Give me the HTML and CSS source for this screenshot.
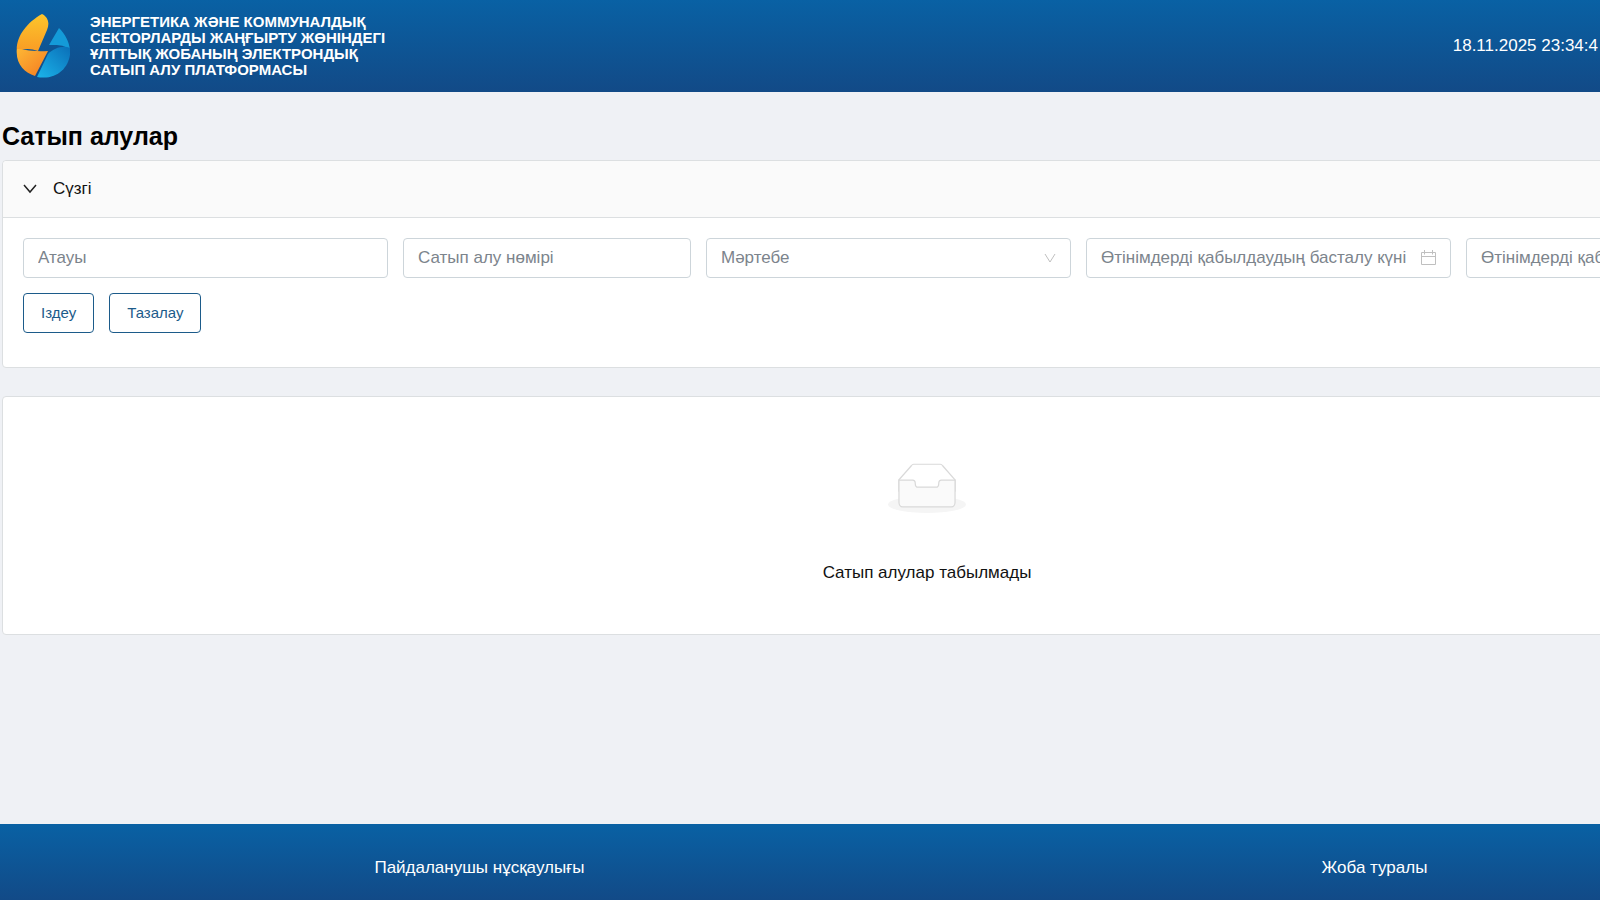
FILE: index.html
```html
<!DOCTYPE html>
<html lang="kk">
<head>
<meta charset="utf-8">
<title>Сатып алулар</title>
<link rel="stylesheet" href="styles.css">
</head>
<body>
<div class="app">
  <header class="header">
    <svg class="logo" viewBox="0 0 54 64" aria-hidden="true">
      <defs>
        <linearGradient id="flame" x1="0" y1="0" x2="0" y2="1">
          <stop offset="0" stop-color="#fcc62c"/>
          <stop offset="1" stop-color="#f99a24"/>
        </linearGradient>
        <linearGradient id="ember" x1="0" y1="0" x2="1" y2="1">
          <stop offset="0" stop-color="#fdb735"/>
          <stop offset="1" stop-color="#f47a20"/>
        </linearGradient>
        <linearGradient id="water" x1="1" y1="0" x2="0" y2="1">
          <stop offset="0" stop-color="#0a6fb8"/>
          <stop offset="1" stop-color="#1bb4ea"/>
        </linearGradient>
      </defs>
      <path fill="url(#flame)" d="M26 0C32 3 34 9 31 16L22 37C14 34 6 34 1 39C-1 24 10 9 26 0Z"/>
      <path fill="url(#ember)" d="M1 35C7 35 14 38 32 37L19 62C8 59-1 49 1 35Z"/>
      <path fill="#149bd8" d="M43 14C49 20 53 27 54 36C47 30 41 31 33 31Z"/>
      <path fill="url(#water)" d="M54 34C56 51 42 67 21 63L32 40C38 34 47 31 54 34Z"/>
    </svg>
    <div class="brand">ЭНЕРГЕТИКА ЖӘНЕ КОММУНАЛДЫҚ<br>СЕКТОРЛАРДЫ ЖАҢҒЫРТУ ЖӨНІНДЕГІ<br>ҰЛТТЫҚ ЖОБАНЫҢ ЭЛЕКТРОНДЫҚ<br>САТЫП АЛУ ПЛАТФОРМАСЫ</div>
    <time class="clock">18.11.2025 23:34:4</time>
  </header>

  <main class="main">
    <h1 class="title">Сатып алулар</h1>

    <section class="panel">
      <button class="panel-head" type="button" aria-expanded="true">
        <svg class="chevron" viewBox="0 0 14 14" aria-hidden="true"><path d="M1 3l6 7 6-7"/></svg>
        Сүзгі
      </button>
      <form class="filters">
        <div class="fields">
          <input class="field" type="text" placeholder="Атауы" aria-label="Атауы">
          <input class="field field-short" type="text" placeholder="Сатып алу нөмірі" aria-label="Сатып алу нөмірі">
          <div class="field-box">
            <select class="field" aria-label="Мәртебе"><option>Мәртебе</option></select>
            <svg class="field-icon arrow" viewBox="0 0 12 12" aria-hidden="true"><path d="M1 2l5 8 5-8"/></svg>
          </div>
          <div class="field-box">
            <input class="field field-date" type="text" placeholder="Өтінімдерді қабылдаудың басталу күні" aria-label="Өтінімдерді қабылдаудың басталу күні">
            <svg class="field-icon" viewBox="0 0 16 16" aria-hidden="true"><path d="M1.500 2.500h14v12h-14zM1.500 6.500h14M4.500 0v4.500M12.500 0v4.500"/></svg>
          </div>
          <div class="field-box">
            <input class="field field-date" type="text" placeholder="Өтінімдерді қабылдаудың аяқталу күні" aria-label="Өтінімдерді қабылдаудың аяқталу күні">
            <svg class="field-icon" viewBox="0 0 16 16" aria-hidden="true"><path d="M1.500 2.500h14v12h-14zM1.500 6.500h14M4.500 0v4.500M12.500 0v4.500"/></svg>
          </div>
        </div>
        <div class="actions">
          <button class="btn" type="button">Іздеу</button>
          <button class="btn" type="button">Тазалау</button>
        </div>
      </form>
    </section>

    <section class="panel empty">
      <svg class="empty-icon" viewBox="0 0 64 41" aria-hidden="true">
        <g transform="translate(0 1)">
          <ellipse fill="#f5f5f5" cx="32" cy="33" rx="32" ry="7"/>
          <g stroke="#d9d9d9">
            <path fill="#fff" d="M55 12.760L44.854 1.258C44.367.474 43.656 0 42.907 0H21.093c-.749 0-1.460.474-1.947 1.257L9 12.761V22h46v-9.240z"/>
            <path fill="#fafafa" d="M41.613 15.931c0-1.605.994-2.930 2.227-2.931H55v18.137C55 33.260 53.680 35 52.050 35h-40.100C10.320 35 9 33.259 9 31.137V13h11.160c1.233 0 2.227 1.323 2.227 2.928v.022c0 1.605 1.005 2.901 2.237 2.901h14.752c1.232 0 2.237-1.308 2.237-2.913v-.007z"/>
          </g>
        </g>
      </svg>
      <p class="empty-text">Сатып алулар табылмады</p>
    </section>
  </main>

  <footer class="footer">
    <a class="footer-link" href="#">Пайдаланушы нұсқаулығы</a>
    <a class="footer-link" href="#">Жоба туралы</a>
  </footer>
</div>
</body>
</html>
```
FILE: styles.css
```css
* {
  box-sizing: border-box;
}

html {
  overflow-x: hidden;
}

body {
  margin: 0;
  background: #eff1f5;
  color: #111;
  font: 17px/24px "Liberation Sans", Arial, sans-serif;
}

/* The five filters stay on one row, so the shell grows past narrow windows. */
.app {
  display: flex;
  flex-direction: column;
  width: max-content;
  min-width: 100%;
  min-height: 100vh;
}

.header {
  display: flex;
  align-items: center;
  height: 92px;
  padding: 0 256px 0 16px;
  background: linear-gradient(#0961a4, #124a87);
  color: #fff;
}

.logo {
  width: 54px;
  height: 64px;
}

.brand {
  margin-left: 20px;
  font-size: 15px;
  font-weight: bold;
  line-height: 16px;
}

.clock {
  margin-left: auto;
}

.main {
  flex: 1;
  padding: 28px 2px;
}

.title {
  margin: 0 0 8px;
  color: #000;
  font-size: 25px;
  line-height: 32px;
}

.panel {
  background: #fff;
  border: 1px solid #dcdfe1;
  border-radius: 4px;
}

.panel-head {
  display: flex;
  align-items: center;
  gap: 16px;
  width: 100%;
  height: 57px;
  padding: 0 20px;
  background: #fafafa;
  border: 0;
  border-bottom: 1px solid #dcdfe1;
  border-radius: 4px 4px 0 0;
  color: #111;
  font: inherit;
}

.chevron {
  width: 14px;
  height: 14px;
  fill: none;
  stroke: #222;
  stroke-width: 1.5;
}

.filters {
  padding: 20px 20px 34px;
}

.fields,
.actions {
  display: flex;
  gap: 15px;
}

.actions {
  margin-top: 15px;
}

.field-box {
  display: grid;
  align-items: center;
}

.field-box > * {
  grid-area: 1 / 1;
}

.field {
  width: 365px;
  height: 40px;
  padding: 0 14px;
  appearance: none;
  background: #fff;
  border: 1px solid #cdd5da;
  border-radius: 4px;
  color: #7c848c;
  font: inherit;
}

.field::placeholder {
  color: #7c848c;
  opacity: 1;
}

.field-short {
  width: 288px;
}

.field-date {
  padding-right: 36px;
}

.field-icon {
  justify-self: end;
  width: 16px;
  height: 16px;
  margin-right: 15px;
  fill: none;
  stroke: #bfbfbf;
  pointer-events: none;
}

.arrow {
  width: 12px;
  height: 12px;
}

.btn {
  height: 40px;
  padding: 0 17px;
  background: #fff;
  border: 1px solid #1c5b8a;
  border-radius: 4px;
  color: #1c5b8a;
  font: inherit;
  font-size: 15px;
}

.empty {
  display: flex;
  flex-direction: column;
  align-items: center;
  margin-top: 28px;
  padding: 66px 0 49px;
}

.empty-icon {
  width: 78px;
  height: 50px;
  fill: none;
}

.empty-text {
  margin: 48px 0 0;
}

.footer {
  display: grid;
  grid-template-columns: 1fr 1fr;
  align-items: center;
  justify-items: center;
  height: 76px;
  padding: 12px 32px 0;
  background: linear-gradient(#0961a4, #124a87);
}

.footer-link {
  color: #fff;
  text-decoration: none;
}
```
